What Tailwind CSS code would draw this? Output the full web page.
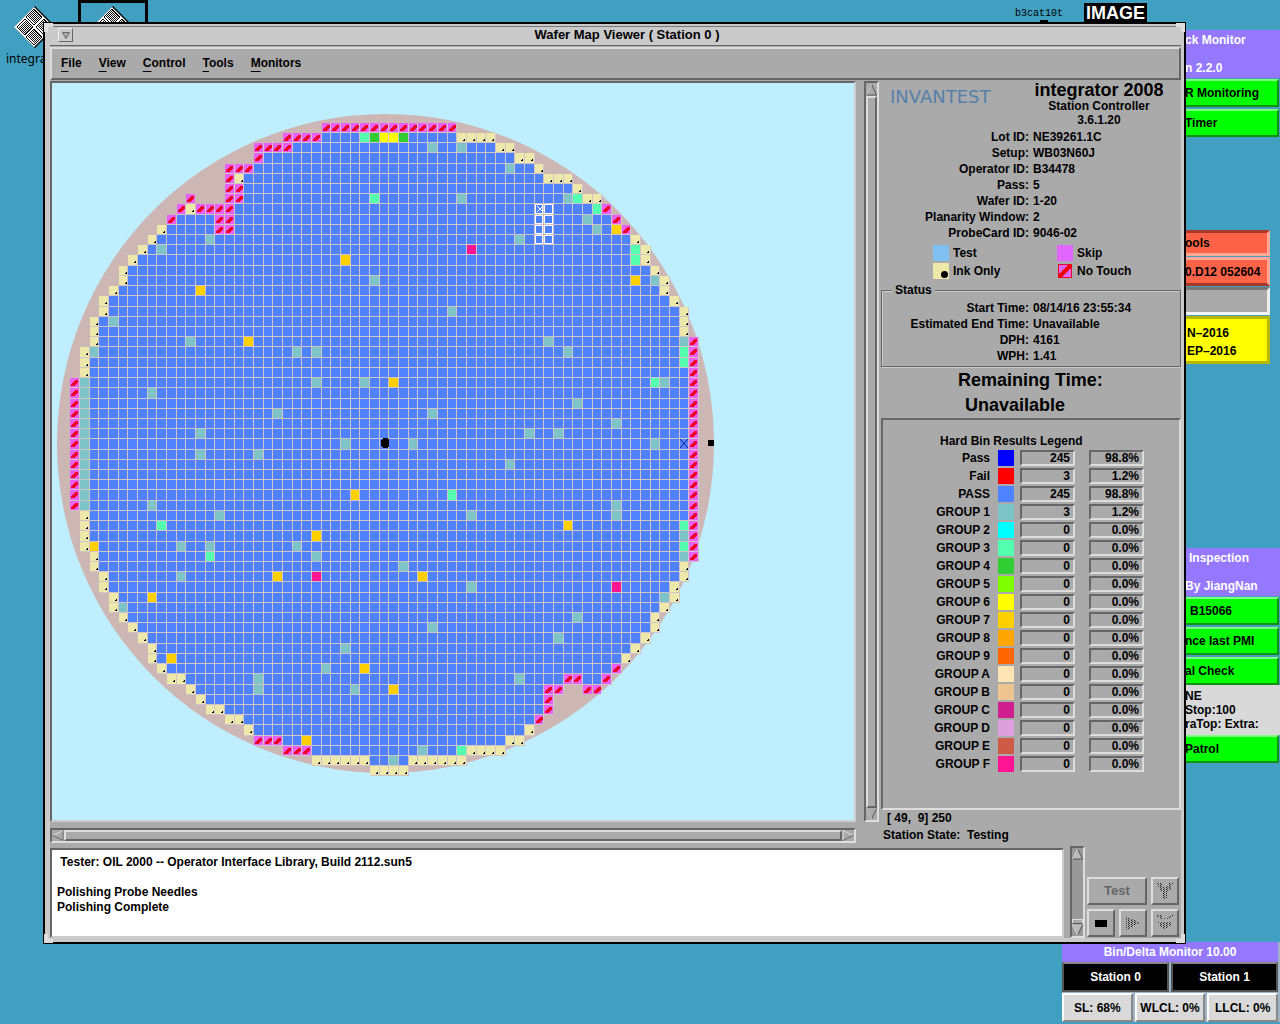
<!DOCTYPE html>
<html lang="en">
<head>
<meta charset="utf-8">
<title>Wafer Map Viewer ( Station 0 )</title>
<script src="https://cdn.jsdelivr.net/npm/@tailwindcss/browser@4"></script>
</head>
<body class="relative h-screen overflow-hidden bg-[#419fc1] font-['Liberation_Sans',sans-serif] text-[12px] leading-4 font-bold text-black">

<svg width="0" height="0" class="absolute" aria-hidden="true">
  <defs>
    <pattern id="dither" width="2" height="2" patternUnits="userSpaceOnUse"><rect width="1" height="1" fill="#111"/><rect x="1" y="1" width="1" height="1" fill="#111"/></pattern>
    <pattern id="dots" width="3" height="2" patternUnits="userSpaceOnUse"><rect width="1" height="1" fill="#222"/><rect x="1" y="1" width="1" height="1" fill="#444"/></pattern>
    <symbol id="wafer-icon" viewBox="0 0 42 42">
      <path d="M21 0L42 21L21 42L0 21Z" fill="#000"/>
      <path d="M20 1L40 21L20 41L0 21Z" fill="#fff"/>
      <g stroke="#000" fill="#fff"><path d="M20 3L28 11L20 19L12 11Z"/><path d="M11 13L19 21L11 29L3 21Z"/><path d="M30 13L38 21L30 29L22 21Z"/><path d="M20 23L28 31L20 39L12 31Z"/></g>
      <g fill="url(#dither)" shape-rendering="crispEdges"><path d="M20 4L27 11L20 18L13 11Z"/><path d="M11 14L18 21L11 28L4 21Z"/><path d="M30 14L37 21L30 28L23 21Z"/><path d="M20 24L27 31L20 38L13 31Z"/></g>
    </symbol>
  </defs>
</svg>

<!-- Desktop icons -->
<div class="absolute top-[6px] left-[6px] font-normal font-['Noto_Sans',sans-serif]">
  <svg class="ml-2 size-[42px]"><use href="#wafer-icon"/></svg>
  <div class="mt-[3px] w-[38px] overflow-hidden text-[12px]">integrator</div>
</div>
<div class="absolute top-0 left-[78px] h-[60px] w-[70px] border-[3px] border-black pt-[3px]">
  <svg class="mx-auto size-[42px]"><use href="#wafer-icon"/></svg>
</div>
<div class="absolute top-[6px] right-[217px] text-[10px] font-normal font-['Liberation_Mono',monospace]">b3cat10t</div>
<div class="absolute top-[20px] right-[232px] h-2 w-[8px] bg-black"></div>
<div class="absolute top-[3px] right-[133px] bg-black px-[2px] text-[18px] leading-[20px] text-white">IMAGE</div>

<!-- Monitors docked on the right edge -->
<aside class="absolute top-[30px] right-0 w-[95px]">
  <div class="h-12 bg-[#9478ff] pt-[2px] text-white">
    <div class="mb-3">ck Monitor</div>
    <div>n 2.2.0</div>
  </div>
  <button class="mt-px block h-7 w-[94px] border-2 border-l-0 border-t-[#80ff80] border-r-[#109010] border-b-[#109010] bg-[#00ff00] text-left">R Monitoring</button>
  <button class="mt-[2px] block h-7 w-[94px] border-2 border-l-0 border-t-[#80ff80] border-r-[#109010] border-b-[#109010] bg-[#00ff00] text-left">Timer</button>
</aside>
<aside class="absolute top-[230px] right-[10px] w-[85px]">
  <button class="block h-[26px] w-full border-[3px] border-l-0 border-[#ffa898] border-t-[#a83828] bg-[#ff6347] text-left">ools</button>
  <button class="mt-px block h-[29px] w-full border-[3px] border-l-0 border-t-[#ffa898] border-r-[#ffa898] border-b-[#a83828] bg-[#ff6347] text-left whitespace-nowrap">0.D12 052604</button>
  <div class="mt-px h-[28px] border-[3px] border-l-0 border-t-[#777] border-r-[#eee] border-b-[#f4f4f4] bg-[#aaa]"></div>
  <div class="mt-px h-[48px] border-[3px] border-l-0 border-[#b8b800] bg-[#ffff00] pt-[5px] pl-[2px] leading-[18px]">N–2016<br>EP–2016</div>
</aside>
<aside class="absolute top-[548px] right-0 w-[95px]">
  <div class="h-12 bg-[#9478ff] pt-[2px] text-white">
    <div class="mb-3 pl-1">Inspection</div>
    <div>By JiangNan</div>
  </div>
  <div class="w-[94px] space-y-[2px]">
    <button class="mt-px block h-7 w-full border-2 border-l-0 border-t-[#80ff80] border-r-[#109010] border-b-[#109010] bg-[#00ff00] pl-[5px] text-left">B15066</button>
    <button class="block h-7 w-full border-2 border-l-0 border-t-[#80ff80] border-r-[#109010] border-b-[#109010] bg-[#00ff00] text-left whitespace-nowrap">nce last PMI</button>
    <button class="block h-7 w-full border-2 border-l-0 border-t-[#80ff80] border-r-[#109010] border-b-[#109010] bg-[#00ff00] text-left">al Check</button>
  </div>
  <div class="h-[50px] bg-[#d9d9d9] pt-[4px] leading-[14px] whitespace-nowrap">NE<br>Stop:100<br>raTop: Extra:</div>
  <button class="block h-7 w-[94px] border-2 border-l-0 border-t-[#80ff80] border-r-[#109010] border-b-[#109010] bg-[#00ff00] text-left">Patrol</button>
</aside>
<section class="absolute top-[942px] right-0 w-[218px] bg-[#9db3c6] pr-[2px] text-center">
  <h2 class="h-5 bg-[#9478ff] leading-5 text-white">Bin/Delta Monitor 10.00</h2>
  <div class="grid grid-cols-2 gap-[2px] text-white">
    <button class="h-[30px] border-2 border-[#555] border-t-[#888] bg-black">Station 0</button>
    <button class="h-[30px] border-2 border-[#555] border-t-[#888] bg-black">Station 1</button>
  </div>
  <div class="grid grid-cols-3 gap-[2px] pt-px">
    <button class="h-[29px] border-2 border-white border-r-[#888] border-b-[#888] bg-[#d9d9d9]">SL: 68%</button>
    <button class="h-[29px] border-2 border-white border-r-[#888] border-b-[#888] bg-[#d9d9d9] whitespace-nowrap">WLCL: 0%</button>
    <button class="h-[29px] border-2 border-white border-r-[#888] border-b-[#888] bg-[#d9d9d9] whitespace-nowrap">LLCL: 0%</button>
  </div>
</section>

<!-- Main window -->
<main class="absolute top-[22px] right-[94px] left-[43px] border-2 border-black">
  <div class="border-4 border-t-2 border-r-[3px] border-l-[5px] border-[#cacaca] bg-[#aaa]">
    <header class="flex h-[20px] items-center border-t border-b border-t-[#777] border-b-[#666] bg-[#cacaca] pb-[2px] pl-2">
      <button aria-label="Window menu" class="flex h-[14px] w-[15px] items-center justify-center border border-[#eee] border-r-[#666] border-b-[#666]">
        <svg width="8" height="7"><path d="M.5 .5H7.5L4 6.5Z" fill="#aaa" stroke="#666"/></svg>
      </button>
      <h1 class="grow text-center text-[13px]">Wafer Map Viewer ( Station 0 )</h1>
    </header>
    <nav class="mt-[1px] flex h-[33px] items-center gap-[17px] border-2 border-[#dcdcdc] border-r-[#666] border-b-[#666] pb-[2px] pl-[9px]">
      <button><span class="underline underline-offset-4">F</span>ile</button>
      <button><span class="underline underline-offset-4">V</span>iew</button>
      <button><span class="underline underline-offset-4">C</span>ontrol</button>
      <button><span class="underline underline-offset-4">T</span>ools</button>
      <button><span class="underline underline-offset-4">M</span>onitors</button>
    </nav>

    <div class="flex h-[766px] pt-px">
      <div class="flex min-w-0 grow flex-col">
        <div class="h-[741px] overflow-hidden border-2 border-[#666] border-r-[#ccc] border-b-[#ccc] bg-[#bfefff]">
          <svg id="wafer" width="804" height="738" viewBox="52 83 804 738" shape-rendering="crispEdges" role="img" aria-label="Wafer map"></svg>
        </div>
        <div class="mt-[6px] flex h-[15px] items-center justify-between border-2 border-[#666] border-r-[#ddd] border-b-[#ddd] bg-[#aaa]">
          <svg width="12" height="11"><path d="M11 .5L1 5.5L11 10.5Z" fill="#aaa" stroke="#ddd"/><path d="M11 .5V10.5L1 5.5" fill="none" stroke="#555"/></svg>
          <div class="h-[11px] grow border-2 border-[#ddd] border-r-[#666] border-b-[#666]"></div>
          <svg width="12" height="11"><path d="M1 .5L11 5.5L1 10.5Z" fill="#aaa" stroke="#ddd"/><path d="M1 10.5L11 5.5" fill="none" stroke="#555"/></svg>
        </div>
      </div>
      <div class="ml-2 flex h-[741px] w-[15px] shrink-0 flex-col items-center border-2 border-[#666] border-r-[#ddd] border-b-[#ddd]">
        <svg width="11" height="13"><path d="M5.5 1L10.5 12H.5Z" fill="#aaa" stroke="#555"/><path d="M.5 12L5.5 1" stroke="#ddd"/></svg>
        <div class="w-[11px] grow border-2 border-[#ddd] border-r-[#666] border-b-[#666]"></div>
        <svg width="11" height="12"><path d="M5.5 11L10.5 1H.5Z" fill="#aaa" stroke="#555"/><path d="M10 1H.5L5.5 11" fill="none" stroke="#ddd"/></svg>
      </div>

      <div class="ml-[2px] w-[300px] shrink-0 pt-px">
        <div class="flex h-[47px]">
          <div class="w-[136px] pt-[7px] pl-[9px] text-[18px] font-normal text-[#5580aa] font-['DejaVu_Sans',sans-serif]">INVANTEST</div>
          <div class="grow text-center leading-[14px]">
            <div class="text-[18px] leading-[16px]">integrator 2008</div>
            <div class="mt-px">Station Controller</div>
            <div>3.6.1.20</div>
          </div>
        </div>
        <dl class="grid grid-cols-[148px_1fr] gap-x-1">
          <dt class="text-right">Lot ID:</dt><dd>NE39261.1C</dd>
          <dt class="text-right">Setup:</dt><dd>WB03N60J</dd>
          <dt class="text-right">Operator ID:</dt><dd>B34478</dd>
          <dt class="text-right">Pass:</dt><dd>5</dd>
          <dt class="text-right">Wafer ID:</dt><dd>1-20</dd>
          <dt class="text-right">Planarity Window:</dt><dd>2</dd>
          <dt class="text-right">ProbeCard ID:</dt><dd>9046-02</dd>
        </dl>
        <ul class="mt-1 grid grid-cols-[124px_1fr] gap-y-[2px] pl-[52px]">
          <li class="flex gap-1"><span class="size-4 bg-[#7fc0f0]"></span>Test</li>
          <li class="flex gap-1"><span class="size-4 bg-[#e066ff]"></span>Skip</li>
          <li class="flex gap-1"><svg class="size-4"><rect width="16" height="16" fill="#eee8aa"/><circle cx="11.500" cy="11.500" r="3.500"/></svg>Ink Only</li>
          <li class="flex gap-1"><svg class="size-4"><rect x="1.500" y="1.500" width="13" height="13" fill="#e066ff" stroke="#f00020"/><path d="M1 15V12L12 1H15V4L4 15Z" fill="#f00000"/></svg>No Touch</li>
        </ul>
        <fieldset class="mt-[3px] h-[85px] border border-[#666] shadow-[1px_1px_0_#ccc,inset_1px_1px_0_#ccc]">
          <legend class="ml-[10px] bg-[#aaa] px-[3px]">Status</legend>
          <dl class="mt-[2px] grid grid-cols-[147px_1fr] gap-x-1">
            <dt class="text-right">Start Time:</dt><dd>08/14/16 23:55:34</dd>
            <dt class="text-right">Estimated End Time:</dt><dd>Unavailable</dd>
            <dt class="text-right">DPH:</dt><dd>4161</dd>
            <dt class="text-right">WPH:</dt><dd>1.41</dd>
          </dl>
        </fieldset>
        <div class="h-[51px] pt-px pl-[77px] text-[18px] leading-[25px] whitespace-nowrap">
          <div>Remaining Time:</div>
          <div class="pl-[7px]">Unavailable</div>
        </div>
        <section class="h-[392px] border-2 border-[#666] border-r-[#ddd] border-b-[#ddd] pt-[13px]">
          <h2 class="pl-[57px]">Hard Bin Results Legend</h2>
          <table class="ml-[37px] border-separate border-spacing-0">
            <tbody id="bins"></tbody>
          </table>
        </section>
        <div class="pl-[6px] whitespace-pre">[ 49,  9] 250</div>
        <div class="mt-px pl-[2px] whitespace-pre">Station State:  Testing</div>
      </div>
    </div>

    <div class="flex h-[92px] items-stretch">
      <textarea readonly aria-label="Message log" class="mt-[2px] block grow resize-none border-2 border-[#666] border-r-[#ccc] border-b-[#ccc] bg-white px-[5px] pt-[5px] leading-[15px] outline-none"> Tester: OIL 2000 -- Operator Interface Library, Build 2112.sun5

Polishing Probe Needles
Polishing Complete</textarea>
      <div class="ml-[6px] flex w-[15px] flex-col items-center border-2 border-[#666] border-r-[#ddd] border-b-[#ddd] bg-[#999]">
        <svg width="11" height="12"><path d="M5.500 1L10.500 11H.5Z" fill="#bbb" stroke="#555"/><path d="M.5 11L5.500 1" stroke="#eee"/></svg>
        <div class="grow"></div>
        <div class="h-[5px] w-[11px] border border-[#ddd] border-b-[#555] bg-[#aaa]"></div>
        <svg width="11" height="12"><path d="M5.500 11L10.500 1H.5Z" fill="#bbb" stroke="#555"/><path d="M10 1H.5L5.500 11" fill="none" stroke="#eee"/></svg>
      </div>
      <div class="ml-[2px] grid grid-cols-[28px_28px_28px] content-end gap-1 pr-[2px] pb-px">
        <button disabled class="col-span-2 h-7 border-2 border-[#ddd] border-r-[#666] border-b-[#666] text-[13px] text-[#666]">Test</button>
        <button disabled aria-label="Step up" class="flex h-7 items-center justify-center border-2 border-[#ddd] border-r-[#666] border-b-[#666]"><svg width="16" height="16" shape-rendering="crispEdges"><path d="M0 0H4L8 5L12 0H16L13 7L10 9V16H6V9L2 7Z" fill="url(#dots)"/></svg></button>
        <button aria-label="Stop" class="flex h-7 items-center justify-center border-2 border-[#ddd] border-r-[#666] border-b-[#666]"><span class="h-[7px] w-3 bg-black"></span></button>
        <button disabled aria-label="Play" class="flex h-7 items-center justify-center border-2 border-[#ddd] border-r-[#666] border-b-[#666]"><svg width="16" height="14" shape-rendering="crispEdges"><path d="M1 0L15 7L1 14Z" fill="url(#dots)"/></svg></button>
        <button disabled aria-label="Step down" class="flex h-7 items-center justify-center border-2 border-[#ddd] border-r-[#666] border-b-[#666]"><svg width="16" height="16" shape-rendering="crispEdges"><path d="M0 0H3L6 3H10L13 0H16L14 3L12 4H3ZM0 7H16L8 16Z" fill="url(#dots)"/></svg></button>
      </div>
    </div>
  </div>

  <!-- Resize corners -->
  <span class="absolute -top-px -left-px h-[9px] w-[9px] border-t-4 border-l-4 border-[#dedede]"></span>
  <span class="absolute -top-px -right-px h-[9px] w-[9px] border-t-4 border-r-4 border-[#dedede]"></span>
  <span class="absolute -bottom-px -left-px h-[9px] w-[9px] border-b-4 border-l-4 border-[#dedede]"></span>
  <span class="absolute -right-px -bottom-px h-[9px] w-[9px] border-r-4 border-b-4 border-[#dedede]"></span>
</main>

<script>
const COLORS = { g1: '#7cc4c8', g3: '#54ffb0', g4: '#32cd32', g6: '#ffff00', g7: '#ffd000', gf: '#ff1493' };

// Hard bin table
const bins = [['Pass','#0000ff',245,'98.8%'],['Fail','#ff0000',3,'1.2%'],['PASS','#4f82ff',245,'98.8%'],
  ['GROUP 1','#7cc4c8',3,'1.2%'],['GROUP 2','#00ffff'],['GROUP 3','#54ffb0'],['GROUP 4','#32cd32'],['GROUP 5','#80ff00'],
  ['GROUP 6','#ffff00'],['GROUP 7','#ffd000'],['GROUP 8','#ffa500'],['GROUP 9','#ff6600'],['GROUP A','#ffe4b5'],
  ['GROUP B','#eec591'],['GROUP C','#d02090'],['GROUP D','#dda0dd'],['GROUP E','#cd5b45'],['GROUP F','#ff1493']];
const field = 'h-[16px] border-2 border-[#666] border-r-[#ddd] border-b-[#ddd] pr-[3px] text-right leading-[13px]';
document.getElementById('bins').innerHTML = bins.map(([name, color, n = 0, pct = '0.0%']) =>
  `<tr class="h-[18px]"><th scope="row" class="w-[70px] p-0 text-right leading-[18px] whitespace-nowrap">${name}</th>
   <td class="w-[30px] p-0 pl-2"><div class="size-4" style="background:${color}"></div></td>
   <td class="w-[69px] p-0"><div class="w-[55px] ${field}">${n}</div></td>
   <td class="p-0"><div class="w-[55px] ${field}">${pct}</div></td></tr>`).join('');

// Wafer map: die columns 0-64, rows 0-63
const X = c => Math.round(70.3 + 9.672 * c), Y = r => Math.round(122.7 + 10.215 * r);
const first = [26,22,19,19,16,16,16,16,11,10,9,8,7,6,5,5,4,3,3,2,2,2,1,1,1,0,0,0,0,0,0,0,0,0,0,0,0,0,1,1,1,1,2,2,3,3,4,4,5,6,7,8,8,9,10,12,13,14,16,18,19,22,25,31];
const last = [39,43,45,47,48,51,52,54,55,56,57,58,59,59,60,61,61,62,63,63,63,64,64,64,64,64,64,64,64,64,64,64,64,64,64,64,64,64,64,64,64,64,64,63,63,62,62,61,60,60,59,58,57,56,55,50,49,49,48,47,46,44,40,34];
const range = (a, b) => Array.from({ length: b - a + 1 }, (_, i) => a + i);
// dies left bare between the edge runs: row -> columns
const bare = { 7: [13,14,15] };
// row -> columns
const noTouch = { 0: range(26,39), 1: range(22,25), 2: range(19,22), 3: [19], 4: [16,17,18], 5: [16], 6: [16,17], 7: [16,17],
  8: [11,13,14,15,16,55], 9: [10,15,16,56], 10: [15,16,57], 53: [56], 54: [51,52,55], 55: [49,50,53,54], 56: [49], 57: [49], 58: [48],
  60: [19,20,21], 61: [22,23,24] };
noTouch[7].push(12);
range(21,42).forEach(r => (noTouch[r] ??= []).push(64));
range(25,37).forEach(r => noTouch[r].push(0));
const ink = { 1: range(40,43), 2: [44,45], 3: [46,47], 4: [48], 5: [17,49,50,51], 6: [52], 7: [53,54], 8: [12], 10: [9], 11: [8,58],
  12: [7,59], 13: [6,59], 14: [5,60], 15: [5,61], 16: [4,61], 17: [3,62], 18: [3,63], 19: [2,63], 20: [2,63], 21: [2], 22: [1], 23: [1], 24: [1],
  38: [1], 39: [1], 40: [1], 41: [1], 42: [2], 43: [2,63], 44: [3,63], 45: [3,62], 46: [4,62], 47: [4], 48: [5,60], 49: [6,60], 50: [7,59],
  51: [8,58], 52: [8,57], 53: [9], 54: [10,11], 55: [12], 56: [13], 57: [14,15], 58: [16,17], 59: [18,47], 60: [45,46], 61: range(41,44),
  62: [...range(25,30), ...range(35,40)], 63: range(31,34) };
ink[47].push(61);
// bin -> [column, row]
const results = {
  g1: [[37,2],[40,2],[45,4],[40,7],[51,7],[53,9],[54,10],[14,11],[46,11],[9,12],[31,15],[60,15],[39,18],[4,19],[12,21],[49,21],[63,21],[2,22],
    [23,22],[25,22],[51,22],[25,25],[30,25],[61,25],[8,26],[52,27],[21,28],[37,28],[56,29],[13,30],[47,30],[50,30],[28,31],[35,31],[60,31],
    [13,32],[19,32],[45,33],[8,37],[56,37],[15,38],[41,38],[56,38],[63,40],[11,41],[14,41],[23,41],[25,42],[63,42],[34,43],[11,44],[41,45],
    [61,46],[5,47],[52,48],[37,49],[50,50],[28,51],[26,53],[19,54],[46,54],[19,55],[29,55],[36,61],[33,62], ...range(25,37).map(r => [1,r])],
  g3: [[30,1],[31,7],[52,7],[54,8],[58,12],[58,13],[63,22],[63,23],[60,25],[39,36],[9,39],[63,39],[14,42],[63,41],[40,61]],
  g4: [[31,1],[34,1]],
  g6: [[32,1],[33,1]],
  g7: [[56,10],[28,13],[58,15],[13,16],[18,21],[33,25],[29,36],[51,39],[25,40],[2,41],[21,44],[36,44],[8,46],[10,52],[30,53],[33,55],[24,60]],
  gf: [[41,12],[25,44],[56,45]],
};
const die = (c, r, fill, pad = 1) => `<rect x="${X(c)}" y="${Y(r)}" width="${X(c+1)-X(c)-pad}" height="${Y(r+1)-Y(r)-pad}" fill="${fill}"/>`;
let s = '<ellipse cx="385.5" cy="443.500" rx="328.500" ry="329.500" fill="#cdb7b5" shape-rendering="auto"/>';
for (let r = 0; r < 64; r++) for (let c = first[r]; c <= last[r]; c++)
  if (!bare[r]?.includes(c)) s += die(c, r, '#d0c4c8', 0) + die(c, r, '#4f82ff');
for (const bin in results) for (const [c, r] of results[bin]) s += die(c, r, COLORS[bin]);
for (const r in ink) for (const c of ink[r]) {
  const x = X(c), y = Y(+r);
  s += die(c, +r, '#eee8aa') + `<path d="M${x+6} ${y+8}h2v-2h-1v1h-1z"/>`;
}
for (const r in noTouch) for (const c of noTouch[r]) {
  const x = X(c), y = Y(+r);
  s += die(c, +r, '#e860f8') + `<path d="M${x+1} ${y+8}v-2l4 -4h3v2l-4 4z" fill="#ee0028"/>`;
}
for (let r = 8; r < 12; r++) for (const c of [48,49])
  s += `<rect x="${X(c)+.5}" y="${Y(r)+.5}" width="${X(c+1)-X(c)-2}" height="${Y(r+1)-Y(r)-2}" fill="none" stroke="#fff"/>`;
s += `<path d="M${X(48)+2} ${Y(8)+2}l6 6m0 -6l-6 6" stroke="#fff" shape-rendering="auto"/>`;
s += `<path d="M${X(63)} ${Y(31)}l8 9m0 -9l-8 9" stroke="#102080" shape-rendering="auto"/>`;
s += '<path d="M383 438h4l2 2v6l-2 2h-4l-2 -2v-6z"/><rect x="708" y="440" width="6" height="6"/>';
document.getElementById('wafer').innerHTML = s;
</script>
</body>
</html>
